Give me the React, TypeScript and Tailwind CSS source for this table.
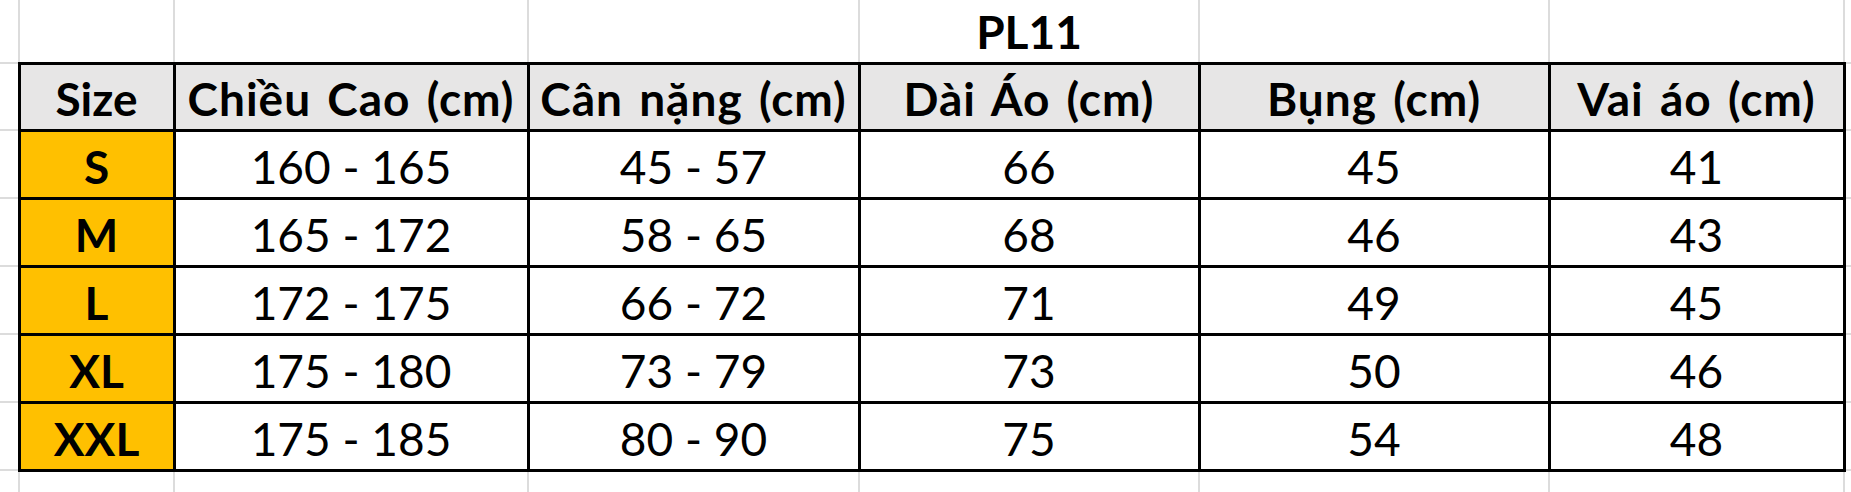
import React from 'react'

const headers = ['Size', 'Chiều Cao (cm)', 'Cân nặng (cm)', 'Dài Áo (cm)', 'Bụng (cm)', 'Vai áo (cm)']

const rows = [
  ['S', '160 - 165', '45 - 57', '66', '45', '41'],
  ['M', '165 - 172', '58 - 65', '68', '46', '43'],
  ['L', '172 - 175', '66 - 72', '71', '49', '45'],
  ['XL', '175 - 180', '73 - 79', '73', '50', '46'],
  ['XXL', '175 - 185', '80 - 90', '75', '54', '48'],
]

// sheet gridline vs. table border
const grid = 'border-2 border-[#dcdcdc]'
const line = 'border-[3px] border-black'
const cell = 'p-0 pb-[2px] align-bottom text-center whitespace-nowrap'

export default function App() {
  return (
    <div className="w-[1851px] h-[492px] overflow-hidden bg-white text-black font-[Lato,sans-serif] text-[46px] leading-[1.2]">
      <table className="table-fixed border-collapse w-[1944px]">
        <colgroup>
          <col className="w-[19px]" />
          <col className="w-[155px]" />
          <col className="w-[354px]" />
          <col className="w-[331px]" />
          <col className="w-[340px]" />
          <col className="w-[350px]" />
          <col className="w-[295px]" />
          <col className="w-[100px]" />
        </colgroup>
        <tbody>
          <tr className="h-[63px]">
            <td className={`${grid} border-t-0 border-l-0`} />
            <td className={`${grid} border-t-0`} />
            <td className={`${grid} border-t-0`} />
            <td className={`${grid} border-t-0`} />
            <td className={`${grid} border-t-0 ${cell} font-bold`}>PL11</td>
            <td className={`${grid} border-t-0`} />
            <td className={`${grid} border-t-0`} />
            <td className={`${grid} border-t-0`} />
          </tr>
          <tr className="h-[67px]">
            <td className={`${grid} border-l-0`} />
            {headers.map((h, i) => (
              <td
                key={h}
                className={`${line} ${cell} bg-[#e7e6e6] font-bold ${i > 0 ? 'tracking-[1px] [word-spacing:4px]' : ''}`}
              >
                {h}
              </td>
            ))}
            <td className={grid} />
          </tr>
          {rows.map(r => (
            <tr key={r[0]} className="h-[68px]">
              <td className={`${grid} border-l-0`} />
              <td className={`${line} ${cell} bg-[#ffc000] font-bold`}>{r[0]}</td>
              {r.slice(1).map((v, i) => (
                <td key={i} className={`${line} ${cell}`}>{v}</td>
              ))}
              <td className={grid} />
            </tr>
          ))}
          <tr className="h-[68px]">
            <td className={`${grid} border-l-0`} />
            <td className={grid} />
            <td className={grid} />
            <td className={grid} />
            <td className={grid} />
            <td className={grid} />
            <td className={grid} />
            <td className={grid} />
          </tr>
        </tbody>
      </table>
    </div>
  )
}
